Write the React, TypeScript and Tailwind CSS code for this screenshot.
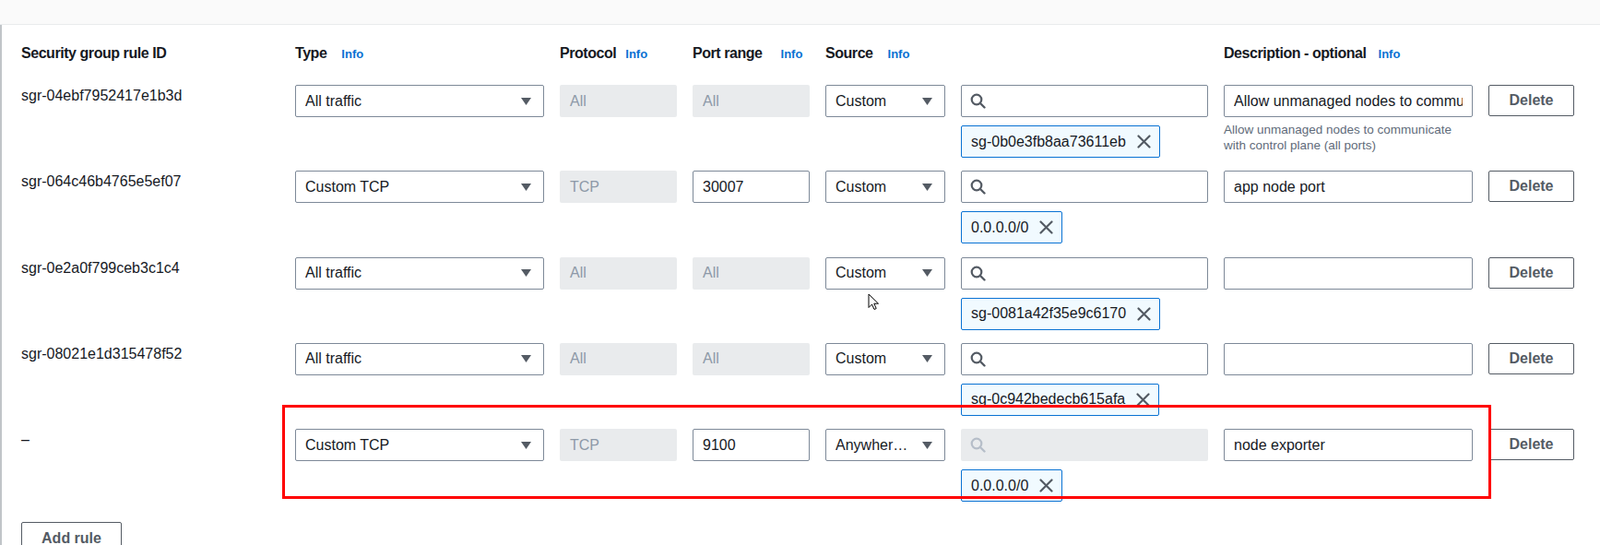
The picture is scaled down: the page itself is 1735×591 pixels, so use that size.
import React from 'react';

type Rule = {
  id: string;
  type: string;
  protocol: string;
  port: string | null;
  source: string;
  searchDisabled?: boolean;
  token: string;
  desc: string;
  help?: string;
};

const rules: Rule[] = [
  {
    id: 'sgr-04ebf7952417e1b3d',
    type: 'All traffic',
    protocol: 'All',
    port: null,
    source: 'Custom',
    token: 'sg-0b0e3fb8aa73611eb',
    desc: 'Allow unmanaged nodes to communicate with control plane (all ports)',
    help: 'Allow unmanaged nodes to communicate with control plane (all ports)',
  },
  { id: 'sgr-064c46b4765e5ef07', type: 'Custom TCP', protocol: 'TCP', port: '30007', source: 'Custom', token: '0.0.0.0/0', desc: 'app node port' },
  { id: 'sgr-0e2a0f799ceb3c1c4', type: 'All traffic', protocol: 'All', port: null, source: 'Custom', token: 'sg-0081a42f35e9c6170', desc: '' },
  { id: 'sgr-08021e1d315478f52', type: 'All traffic', protocol: 'All', port: null, source: 'Custom', token: 'sg-0c942bedecb615afa', desc: '' },
  { id: '–', type: 'Custom TCP', protocol: 'TCP', port: '9100', source: 'Anywhere-IPv4', searchDisabled: true, token: '0.0.0.0/0', desc: 'node exporter' },
];

const cols = 'grid grid-cols-[280px_270px_127px_127px_130px_268px_270px_93px] gap-x-[17px]';

const Caret = () => (
  <svg width="11" height="8" viewBox="0 0 11 8" className="shrink-0">
    <path d="M0 0 H11 L5.5 8 Z" fill="#545b64" />
  </svg>
);

const SearchIcon = ({ color }: { color: string }) => (
  <svg width="17" height="17" viewBox="0 0 17 17" fill="none" className="shrink-0">
    <circle cx="7" cy="7" r="5.3" stroke={color} strokeWidth="2.2" />
    <path d="M11 11 L15.5 15.5" stroke={color} strokeWidth="2.4" strokeLinecap="round" />
  </svg>
);

const XIcon = () => (
  <svg width="15" height="15" viewBox="0 0 15 15" fill="none" className="shrink-0">
    <path d="M1.5 1.5 L13.5 13.5 M13.5 1.5 L1.5 13.5" stroke="#545b64" strokeWidth="2.2" strokeLinecap="round" />
  </svg>
);

const Select = ({ value }: { value: string }) => (
  <div className="h-[35px] flex items-center border border-[#7d8998] rounded-[2px] bg-white pl-[10px] pr-[13px]">
    <span className="flex-1 min-w-0 truncate mr-[11px]">{value}</span>
    <Caret />
  </div>
);

const Disabled = ({ value }: { value: string }) => (
  <div className="h-[35px] flex items-center rounded-[2px] bg-[#e9ebed] pl-[11px] text-[#8d99a8]">{value}</div>
);

const TextInput = ({ value }: { value: string }) => (
  <input
    readOnly
    value={value}
    className="block w-full h-[35px] border border-[#7d8998] rounded-[2px] bg-white px-[10px] text-[16px] text-[#16191f] outline-none"
  />
);

const Search = ({ disabled }: { disabled?: boolean }) => (
  <div
    className={
      disabled
        ? 'h-[35px] flex items-center rounded-[2px] bg-[#e9ebed] pl-[10px]'
        : 'h-[35px] flex items-center border border-[#7d8998] rounded-[2px] bg-white pl-[9px]'
    }
  >
    <SearchIcon color={disabled ? '#b6bec9' : '#545b64'} />
  </div>
);

const Token = ({ label }: { label: string }) => (
  <div className="mt-[9px] inline-flex h-[35px] items-center gap-[12px] border border-[#0972d3] bg-[#f1faff] rounded-[2px] pl-[10px] pr-[9px]">
    <span>{label}</span>
    <XIcon />
  </div>
);

const Header = ({ label, gap }: { label: string; gap: string }) => (
  <div className="flex items-baseline">
    <span className="font-bold text-[16px] tracking-[-0.45px]">{label}</span>
    <span className={`${gap} font-bold text-[13px] text-[#0972d3]`}>Info</span>
  </div>
);

export default function App() {
  return (
    <div className="relative h-[591px] overflow-hidden bg-white text-[16px] leading-[20px] text-[#16191f] font-['Liberation_Sans',Arial,sans-serif]">
      <div className="h-[27px] bg-[#fafafa] border-b border-[#e9ebed]" />

      <div className="border-l-[2px] border-[#c0c4c8] pl-[21px] pt-[21px] min-h-[564px]">
        {/* column headers */}
        <div className={cols}>
          <div className="font-bold text-[16px] tracking-[-0.45px]">Security group rule ID</div>
          <Header label="Type" gap="ml-[16px]" />
          <Header label="Protocol" gap="ml-[10px]" />
          <Header label="Port range" gap="ml-[20px]" />
          <Header label="Source" gap="ml-[16px]" />
          <div />
          <Header label="Description - optional" gap="ml-[13px]" />
          <div />
        </div>

        <div className="mt-[23px] flex flex-col gap-y-[14.25px]">
          {rules.map((r) => (
            <div key={r.id + r.token} className={`${cols} h-[79px]`}>
              <div className="pt-[2px]">{r.id}</div>
              <Select value={r.type} />
              <Disabled value={r.protocol} />
              {r.port ? <TextInput value={r.port} /> : <Disabled value="All" />}
              <Select value={r.source} />
              <div className="flex flex-col items-start">
                <div className="w-full">
                  <Search disabled={r.searchDisabled} />
                </div>
                <Token label={r.token} />
              </div>
              <div>
                <TextInput value={r.desc} />
                {r.help && (
                  <p className="mt-[5px] text-[13.5px] leading-[17px] text-[#5f6b7a]">{r.help}</p>
                )}
              </div>
              <button className="h-[34px] border border-[#545b64] rounded-[2px] font-bold text-[#545b64]">Delete</button>
            </div>
          ))}
        </div>

        <button className="mt-[22px] w-[109px] h-[35px] border border-[#545b64] rounded-[2px] font-bold text-[#545b64]">
          Add rule
        </button>
      </div>

      {/* annotation box */}
      <div className="absolute left-[306px] top-[439px] w-[1311px] h-[102px] border-[3px] border-[#ff0000] pointer-events-none" />

      {/* mouse pointer */}
      <svg className="absolute left-[941px] top-[318px]" width="13" height="19" viewBox="0 0 13 19">
        <path d="M1 1 L1 15.5 L4.5 12 L7 17.5 L9.2 16.5 L6.8 11.2 L11.5 11.2 Z" fill="#ffffff" stroke="#000000" strokeWidth="1" strokeLinejoin="round" />
      </svg>
    </div>
  );
}
